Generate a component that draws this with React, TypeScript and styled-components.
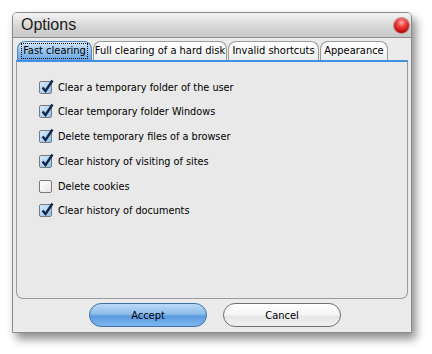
import { createGlobalStyle } from 'styled-components';
import styled from 'styled-components';

const GlobalStyle = createGlobalStyle`
  html, body {
    margin: 0;
    padding: 0;
    background: #ffffff;
  }
  body {
    font-family: Tahoma, "DejaVu Sans", "Liberation Sans", sans-serif;
  }
`;

const Page = styled.div`
  width: 432px;
  height: 354px;
  padding: 12px 0 0 12px;
  box-sizing: border-box;
`;

const Window = styled.div`
  width: 400px;
  height: 321px;
  box-sizing: border-box;
  border: 1px solid #8a8a8a;
  border-radius: 5px 5px 0 0;
  background: #ebebeb;
  box-shadow: 4px 6px 10px rgba(0, 0, 0, 0.45);
  display: flex;
  flex-direction: column;
`;

const TitleBar = styled.div`
  height: 24px;
  display: flex;
  align-items: center;
  justify-content: space-between;
  padding: 0 2px 0 8px;
  border-radius: 4px 4px 0 0;
  border-bottom: 1px solid #8e8e8e;
  background: linear-gradient(#f4f4f4, #d4d4d4 60%, #c9c9c9);
`;

const Title = styled.span`
  font-family: "Liberation Sans", Arial, sans-serif;
  font-size: 16px;
  color: #202020;
`;

const CloseButton = styled.div`
  width: 15px;
  height: 15px;
  border-radius: 50%;
  background: radial-gradient(circle at 50% 30%, #ffb3b3 0, #f04040 35%, #b80000 80%, #8a0000 100%);
  box-shadow: 0 0 0 1px rgba(120, 0, 0, 0.35);
`;

const TabStrip = styled.div`
  display: flex;
  align-items: flex-end;
  gap: 1px;
  padding: 2px 4px 0;
  height: 20px;
`;

const Tab = styled.div<{ $active?: boolean; $width: number }>`
  width: ${p => p.$width}px;
  height: 19px;
  box-sizing: border-box;
  display: flex;
  align-items: center;
  justify-content: center;
  border: 1px solid ${p => (p.$active ? '#4c86c6' : '#9a9a9a')};
  border-bottom: none;
  border-radius: 8px 8px 0 0;
  background: ${p =>
    p.$active
      ? 'linear-gradient(#d9eafb, #9cc6ef 45%, #6aa8e6)'
      : 'linear-gradient(#ffffff, #f6f6f6 60%, #ececec)'};
  font-family: "DejaVu Sans Condensed", "DejaVu Sans", sans-serif;
  font-size: 11px;
  color: #000;
  white-space: nowrap;
`;

const TabLabel = styled.span<{ $focus?: boolean }>`
  padding: 0 1px;
  outline: ${p => (p.$focus ? '1px dotted #000' : 'none')};
  outline-offset: 0;
  line-height: 14px;
`;

const Panel = styled.div`
  margin: 0 3px;
  height: 239px;
  box-sizing: border-box;
  border: 1px solid #9a9a9a;
  border-top: 2px solid #3f8fe2;
  border-radius: 0 0 7px 7px;
  background: #e9e9e9;
  padding: 18px 0 0 22px;
  display: flex;
  flex-direction: column;
  gap: 10.8px;
`;

const Row = styled.label`
  display: flex;
  align-items: center;
  gap: 6px;
  height: 14px;
  font-family: "DejaVu Sans Condensed", "DejaVu Sans", sans-serif;
  font-size: 10.8px;
  color: #000;
`;

const Box = styled.span<{ $checked?: boolean }>`
  width: 13px;
  height: 13px;
  box-sizing: border-box;
  border: 1px solid #7a7a7a;
  border-radius: 2px;
  background: ${p =>
    p.$checked ? 'linear-gradient(135deg, #d8ebfb, #8fc1ee)' : 'linear-gradient(135deg, #ffffff, #e6e6e6)'};
  position: relative;
  flex: none;
`;

const Tick = styled.svg`
  position: absolute;
  left: 1px;
  top: -3px;
`;

const Footer = styled.div`
  flex: 1;
  display: flex;
  align-items: center;
  justify-content: center;
  gap: 16px;
  padding-left: 6px;
  padding-bottom: 1px;
`;

const Button = styled.button<{ $primary?: boolean }>`
  width: 118px;
  height: 24px;
  border-radius: 12px;
  border: 1px solid ${p => (p.$primary ? '#3c6ea8' : '#6e6e6e')};
  background: ${p =>
    p.$primary
      ? 'linear-gradient(#bcd9f6, #8ebdec 45%, #5c9be0 55%, #7fb6ee)'
      : 'linear-gradient(#ffffff, #f5f5f5 50%, #e6e6e6 55%, #f0f0f0)'};
  font-family: "DejaVu Sans Condensed", "DejaVu Sans", sans-serif;
  font-size: 11px;
  color: #000;
  padding: 0;
`;

const items = [
  { label: 'Clear a temporary folder of the user', checked: true },
  { label: 'Clear temporary folder Windows', checked: true },
  { label: 'Delete temporary files of a browser', checked: true },
  { label: 'Clear history of visiting of sites', checked: true },
  { label: 'Delete cookies', checked: false },
  { label: 'Clear history of documents', checked: true },
];

const tabs = [
  { label: 'Fast clearing', width: 75, active: true },
  { label: 'Full clearing of a hard disk', width: 134 },
  { label: 'Invalid shortcuts', width: 91 },
  { label: 'Appearance', width: 68 },
];

export default function App() {
  return (
    <Page>
      <GlobalStyle />
      <Window>
        <TitleBar>
          <Title>Options</Title>
          <CloseButton />
        </TitleBar>
        <TabStrip>
          {tabs.map(t => (
            <Tab key={t.label} $active={t.active} $width={t.width}>
              <TabLabel $focus={t.active}>{t.label}</TabLabel>
            </Tab>
          ))}
        </TabStrip>
        <Panel>
          {items.map(it => (
            <Row key={it.label}>
              <Box $checked={it.checked}>
                {it.checked && (
                  <Tick width="13" height="15" viewBox="0 0 13 15">
                    <path d="M1.5 8.5 L4.5 12 L11.5 1.5" fill="none" stroke="#10264a" strokeWidth="2.4" strokeLinejoin="miter" />
                  </Tick>
                )}
              </Box>
              {it.label}
            </Row>
          ))}
        </Panel>
        <Footer>
          <Button $primary>Accept</Button>
          <Button>Cancel</Button>
        </Footer>
      </Window>
    </Page>
  );
}
